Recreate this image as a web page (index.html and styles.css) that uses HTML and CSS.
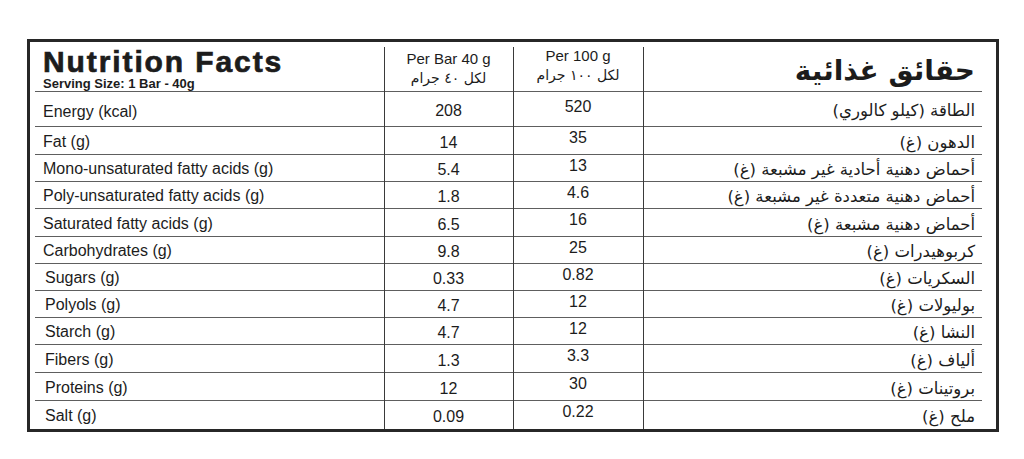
FILE: index.html
```html
<!DOCTYPE html>
<html lang="en">
<head>
  <meta charset="UTF-8">
  <title>Nutrition Facts</title>
  <link rel="stylesheet" href="styles.css">
</head>
<body>

  <div class="panel">
    <table class="facts">
      <colgroup>
        <col class="col-name">
        <col class="col-val">
        <col class="col-val2">
        <col class="col-ar">
      </colgroup>

      <!-- Header -->
      <tr class="head-row">
        <td class="name">
          <div class="title">Nutrition Facts</div>
          <div class="serving">Serving Size: 1 Bar - 40g</div>
        </td>
        <td class="val">
          <div class="per">Per Bar 40 g</div>
          <div class="per-ar" dir="rtl">لكل ٤٠ جرام</div>
        </td>
        <td class="val2">
          <div class="per">Per 100 g</div>
          <div class="per-ar" dir="rtl">لكل ١٠٠ جرام</div>
        </td>
        <td class="ar title-ar" dir="rtl">حقائق غذائية</td>
      </tr>

      <tr class="first-row">
        <td class="name">Energy (kcal)</td>
        <td class="val">208</td>
        <td class="val2">520</td>
        <td class="ar" dir="rtl">الطاقة (كيلو كالوري)</td>
      </tr>
      <tr class="tall">
        <td class="name">Fat (g)</td>
        <td class="val">14</td>
        <td class="val2">35</td>
        <td class="ar" dir="rtl">الدهون (غ)</td>
      </tr>
      <tr>
        <td class="name">Mono-unsaturated fatty acids (g)</td>
        <td class="val">5.4</td>
        <td class="val2">13</td>
        <td class="ar" dir="rtl">أحماض دهنية أحادية غير مشبعة (غ)</td>
      </tr>
      <tr>
        <td class="name">Poly-unsaturated fatty acids (g)</td>
        <td class="val">1.8</td>
        <td class="val2">4.6</td>
        <td class="ar" dir="rtl">أحماض دهنية متعددة غير مشبعة (غ)</td>
      </tr>
      <tr class="tall">
        <td class="name">Saturated fatty acids (g)</td>
        <td class="val">6.5</td>
        <td class="val2">16</td>
        <td class="ar" dir="rtl">أحماض دهنية مشبعة (غ)</td>
      </tr>
      <tr>
        <td class="name">Carbohydrates (g)</td>
        <td class="val">9.8</td>
        <td class="val2">25</td>
        <td class="ar" dir="rtl">كربوهيدرات (غ)</td>
      </tr>
      <tr>
        <td class="name sub">Sugars (g)</td>
        <td class="val">0.33</td>
        <td class="val2">0.82</td>
        <td class="ar" dir="rtl">السكريات (غ)</td>
      </tr>
      <tr>
        <td class="name sub">Polyols (g)</td>
        <td class="val">4.7</td>
        <td class="val2">12</td>
        <td class="ar" dir="rtl">بوليولات (غ)</td>
      </tr>
      <tr>
        <td class="name sub">Starch (g)</td>
        <td class="val">4.7</td>
        <td class="val2">12</td>
        <td class="ar" dir="rtl">النشا (غ)</td>
      </tr>
      <tr class="tall">
        <td class="name sub">Fibers (g)</td>
        <td class="val">1.3</td>
        <td class="val2">3.3</td>
        <td class="ar" dir="rtl">ألياف (غ)</td>
      </tr>
      <tr class="tall">
        <td class="name sub">Proteins (g)</td>
        <td class="val">12</td>
        <td class="val2">30</td>
        <td class="ar" dir="rtl">بروتينات (غ)</td>
      </tr>
      <tr class="last-row">
        <td class="name sub">Salt (g)</td>
        <td class="val">0.09</td>
        <td class="val2">0.22</td>
        <td class="ar" dir="rtl">ملح (غ)</td>
      </tr>
    </table>
  </div>

</body>
</html>
```

FILE: styles.css
```css
* { box-sizing: border-box; }

body {
  margin: 0;
  background: #fff;
  font-family: 'Liberation Sans', Arial, sans-serif;
  color: #1c1c1c;
}

/* Outer frame */
.panel {
  margin: 39px 0 0 27px;
  width: 972px;
  height: 393px;
  border: 3px solid #272727;
  padding: 5px 14px 0 5px;
}

.facts {
  width: 947px;
  border-collapse: collapse;
  table-layout: fixed;
}

.col-name { width: 349px; }
.col-val { width: 129px; }
.col-val2 { width: 130px; }
.col-ar { width: 339px; }

.facts td {
  height: 27px;
  padding: 0;
  font-size: 16px;
  border-top: 1px solid #5e5e5e;
  vertical-align: middle;
}

.facts td + td {
  border-left: 1px solid #3a3a3a;
}

.facts .tall td { height: 28px; }
.facts .first-row td { height: 35px; }
.facts .last-row td { height: 28px; }

/* Header row */
.facts .head-row td {
  height: 44px;
  padding-top: 0;
  border-top: none;
  vertical-align: top;
}

.title {
  font-size: 30px;
  font-weight: 900;
  letter-spacing: 1.9px;
  line-height: 30px;
  -webkit-text-stroke: 0.7px #1c1c1c;
}

.serving {
  font-size: 13px;
  font-weight: bold;
  line-height: 14px;
}

.per {
  font-size: 15px;
  line-height: 18px;
}

.per-ar {
  font-family: 'DejaVu Sans', sans-serif;
  font-size: 14px;
  line-height: 20px;
}

.facts .head-row .val { padding-top: 3px; }

.facts .head-row .title-ar {
  font-size: 28px;
  font-weight: bold;
  line-height: 36px;
  padding-top: 6px;
}

/* Cells */
.facts .name {
  padding-left: 8px;
  padding-top: 2px;
}

.facts .name.sub {
  padding-left: 10px;
}

.facts .first-row .name { padding-top: 5px; }

.facts .val,
.facts .val2 {
  text-align: center;
}

.facts .val { padding-top: 4px; }
.facts .val2 { padding-bottom: 5px; }

.facts .ar {
  text-align: right;
  font-family: 'DejaVu Sans', sans-serif;
  font-size: 16.5px;
  padding-right: 7px;
  padding-top: 3px;
}
```
